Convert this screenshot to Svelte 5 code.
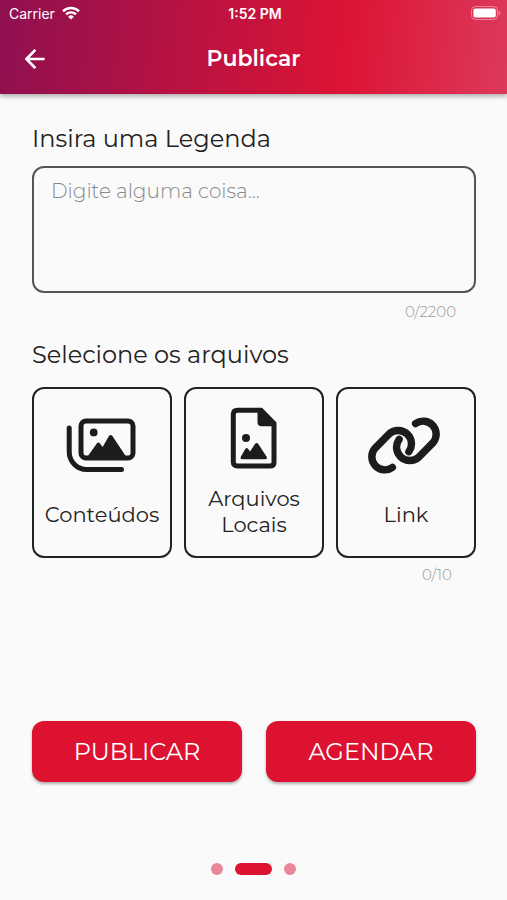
<script lang="ts">
    let legend = $state('');
    let files: string[] = $state([]);
    let step = $state(1);

    const maxLegend = 2200;
    const maxFiles = 10;
    const steps = ['Rede', 'Publicar', 'Resumo'];
</script>

<div class="screen">
    <header>
        <div class="status">
            <div class="carrier">
                <span>Carrier</span>
                <svg width="18" height="14" viewBox="0 0 18 14" aria-hidden="true">
                    <path d="M1 5.3a11.4 11.4 0 0 1 16 0" />
                    <path d="M4 8.4a7.2 7.2 0 0 1 10 0" />
                    <path class="solid" d="M9 13.6 6.1 10.7a4.1 4.1 0 0 1 5.8 0z" />
                </svg>
            </div>
            <time>1:52 PM</time>
            <svg class="battery" width="30" height="14" viewBox="0 0 30 14" aria-hidden="true">
                <rect class="shell" x="0.5" y="0.5" width="26" height="13" rx="4" />
                <rect class="charge" x="2.4" y="2.4" width="22.4" height="9.2" rx="2" />
                <path class="tip" d="M27.6 4.6c2.4.9 2.4 3.9 0 4.8z" />
            </svg>
        </div>
        <div class="bar">
            <button class="back" type="button" aria-label="Voltar">
                <svg width="20" height="20" viewBox="0 0 20 20" aria-hidden="true">
                    <path d="M19.6 10H2M10.4 0.8 1.4 10l9 9.2" />
                </svg>
            </button>
            <h1>Publicar</h1>
        </div>
    </header>

    <main>
        <label for="legend">Insira uma Legenda</label>
        <textarea
            id="legend"
            placeholder="Digite alguma coisa..."
            maxlength={maxLegend}
            bind:value={legend}
        ></textarea>
        <p class="counter">{legend.length}/{maxLegend}</p>

        <h2>Selecione os arquivos</h2>
        <div class="sources">
            <button type="button">
                <svg width="72" height="56" viewBox="0 0 72 56" aria-hidden="true">
                    <rect class="line" x="15" y="4" width="52" height="37" rx="5" />
                    <path class="line" d="M3.2 11v23.5c0 10 7.6 18 17.6 18H55.5" />
                    <circle cx="27.7" cy="15.4" r="3.9" />
                    <path d="M20.5 41 30.8 26.6q1.6-2 3.2 0l2.6 3.5 6.4-11q1.7-2.4 3.4 0L61 41z" />
                </svg>
                <span>Conteúdos</span>
            </button>
            <button type="button">
                <svg width="48" height="62" viewBox="0 0 48 62" aria-hidden="true">
                    <path class="line" d="M7.5 3.3H31L44 16.5v39q0 3.5-4 3.5H7.5q-4.2 0-4.2-4V7.3q0-4 4.2-4z" />
                    <path d="M27.5 2H32L45.5 16v3.3h-14q-4 0-4-4z" />
                    <circle cx="16" cy="31" r="4" />
                    <path d="M12.5 52.2q-3 0-1.5-2.8l4.4-7.6q1.3-1.7 2.6 0l2 2.6 5-7.4q1.7-2.2 3.3 0l8.2 12.4q1.3 2.8-1.4 2.8z" />
                </svg>
                <span>Arquivos Locais</span>
            </button>
            <button type="button">
                <svg width="76" height="57" viewBox="0 0 76 57" aria-hidden="true">
                    <path class="chain" d="M24.4 50.4A13 13 0 0 1 7.2 31.1L21.4 16.6A13.4 13.4 0 0 1 40.9 34.7" />
                    <path class="chain" transform="rotate(180 36 28.5)" d="M24.4 50.4A13 13 0 0 1 7.2 31.1L21.4 16.6A13.4 13.4 0 0 1 40.9 34.7" />
                </svg>
                <span>Link</span>
            </button>
        </div>
        <p class="counter files">{files.length}/{maxFiles}</p>

        <div class="actions">
            <button type="button">PUBLICAR</button>
            <button type="button">AGENDAR</button>
        </div>
    </main>

    <nav aria-label="Etapas">
        {#each steps as name, i}
            <button
                type="button"
                class:active={i === step}
                aria-label={name}
                onclick={() => (step = i)}
            ></button>
        {/each}
    </nav>
</div>

<style>
    :global(body) {
        margin: 0;
        background: #fafafa;
    }

    .screen {
        display: flex;
        flex-direction: column;
        min-height: 100vh;
        color: #222;
        font-family: Montserrat, Inter, sans-serif;
    }

    button {
        padding: 0;
        border: 0;
        background: none;
        color: inherit;
        font: inherit;
        cursor: pointer;
    }

    h1,
    h2,
    p {
        margin: 0;
    }

    header {
        height: 94px;
        color: #fff;
        background: linear-gradient(95deg, #8f1050 0%, #dc1435 68%, #dc395c 100%);
        box-shadow: 0 2px 5px rgba(0, 0, 0, 0.35);
    }

    .status {
        display: grid;
        grid-template-columns: 1fr auto 1fr;
        align-items: center;
        height: 26px;
        padding: 0 6px 0 9px;
        font-family: Inter, sans-serif;
        font-size: 14px;
    }

    .status time {
        font-weight: 600;
    }

    .carrier {
        display: flex;
        align-items: center;
        gap: 7px;
    }

    .carrier path {
        fill: none;
        stroke: #fff;
        stroke-width: 2.4;
    }

    .carrier .solid {
        fill: #fff;
        stroke: none;
    }

    .battery {
        justify-self: end;
    }

    .shell {
        fill: none;
        stroke: #fff;
        opacity: 0.4;
    }

    .charge {
        fill: #fff;
    }

    .tip {
        fill: #fff;
        opacity: 0.4;
    }

    .bar {
        display: grid;
        grid-template-columns: 70px 1fr 70px;
        align-items: center;
        height: 66px;
    }

    .back {
        display: grid;
        place-items: center;
        height: 48px;
    }

    .back path {
        fill: none;
        stroke: #fff;
        stroke-width: 2.6;
    }

    h1 {
        font-size: 22px;
        font-weight: 600;
        line-height: 28px;
        text-align: center;
    }

    main {
        display: flex;
        flex: 1;
        flex-direction: column;
        padding: 29px 31px 0 32px;
    }

    label,
    h2 {
        font-size: 24px;
        font-weight: 400;
        line-height: 32px;
    }

    textarea {
        box-sizing: border-box;
        width: 100%;
        height: 127px;
        margin-top: 11px;
        padding: 9px 17px;
        border: 2px solid #555;
        border-radius: 12px;
        background: none;
        color: inherit;
        font-family: inherit;
        font-size: 20px;
        font-weight: 300;
        line-height: 28px;
        resize: none;
    }

    textarea::placeholder {
        color: #888;
        opacity: 1;
    }

    .counter {
        margin: 9px 20px 0 0;
        color: #999;
        font-size: 15px;
        font-weight: 300;
        line-height: 20px;
        text-align: right;
    }

    .counter.files {
        margin: 7px 24px 0 0;
    }

    h2 {
        margin-top: 17px;
    }

    .sources {
        display: grid;
        grid-template-columns: repeat(3, 1fr);
        gap: 12px;
        margin-top: 16px;
    }

    .sources button {
        display: flex;
        flex-direction: column;
        align-items: center;
        justify-content: space-evenly;
        height: 171px;
        border: 2px solid #222;
        border-radius: 12px;
        font-size: 21px;
        line-height: 26px;
    }

    .sources svg {
        fill: #1c1c1c;
    }

    .sources .line,
    .sources .chain {
        fill: none;
        stroke: #1c1c1c;
        stroke-width: 5;
        stroke-linecap: round;
    }

    .sources .chain {
        stroke-width: 7.4;
    }

    .sources span {
        padding: 0 8px;
    }

    .actions {
        display: grid;
        grid-template-columns: 1fr 1fr;
        gap: 24px;
        margin-top: auto;
    }

    .actions button {
        height: 61px;
        border-radius: 12px;
        background: #dc1230;
        box-shadow: 0 2px 3px rgba(0, 0, 0, 0.3);
        color: #fff;
        font-size: 24px;
    }

    nav {
        display: flex;
        justify-content: center;
        gap: 12px;
        padding: 81px 0 25px;
    }

    nav button {
        width: 12px;
        height: 12px;
        border-radius: 6px;
        background: #e98699;
    }

    nav .active {
        width: 37px;
        background: #dc1230;
    }
</style>
